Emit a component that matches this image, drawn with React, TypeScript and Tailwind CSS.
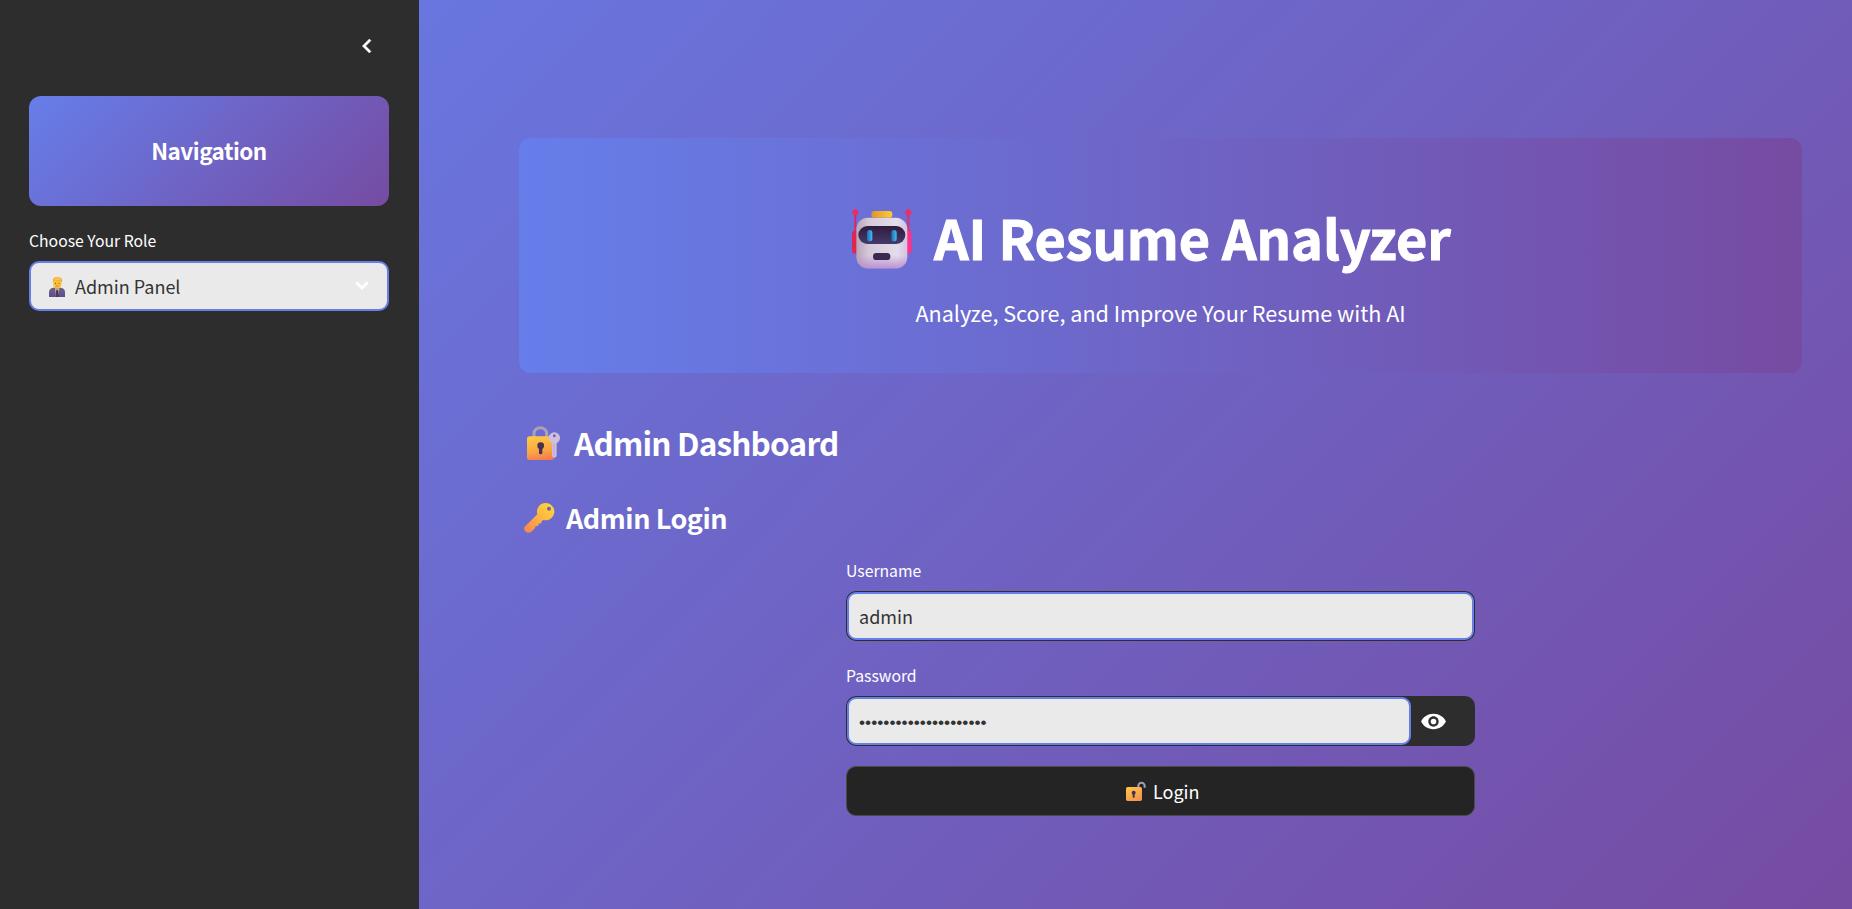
import type { ReactNode } from "react";

function RobotIcon() {
  return (
    <svg className="h-[60px] w-[60px] shrink-0" viewBox="35 27 180 180">
      <defs>
        <linearGradient id="rb-face" x1="0" y1="0" x2="1" y2="0">
          <stop offset="0" stopColor="#b9a3b8" />
          <stop offset="0.25" stopColor="#d6cad9" />
          <stop offset="0.8" stopColor="#e4dcec" />
          <stop offset="1" stopColor="#d3c3e0" />
        </linearGradient>
        <linearGradient id="rb-shade" x1="0" y1="0" x2="0" y2="1">
          <stop offset="0.75" stopColor="#b98ad0" stopOpacity="0" />
          <stop offset="1" stopColor="#b98ad0" stopOpacity="0.9" />
        </linearGradient>
        <linearGradient id="rb-visor" x1="0" y1="0" x2="0" y2="1">
          <stop offset="0" stopColor="#2f1c3c" />
          <stop offset="1" stopColor="#453a6b" />
        </linearGradient>
        <linearGradient id="rb-hat" x1="0" y1="0" x2="1" y2="0">
          <stop offset="0" stopColor="#dd9433" />
          <stop offset="1" stopColor="#ffcb31" />
        </linearGradient>
        <linearGradient id="rb-eye" x1="0" y1="0" x2="1" y2="0">
          <stop offset="0" stopColor="#1c6fae" />
          <stop offset="1" stopColor="#45bdf3" />
        </linearGradient>
      </defs>
      <rect x="42" y="40" width="6" height="60" fill="#d62a5f" />
      <rect x="201" y="40" width="6" height="60" fill="#e82c68" />
      <circle cx="45" cy="37" r="9" fill="#ee2b61" />
      <circle cx="204" cy="37" r="9" fill="#f22b64" />
      <rect x="35" y="92" width="24" height="69" rx="9" fill="#e0264f" />
      <rect x="191" y="92" width="23" height="69" rx="9" fill="#f9328a" />
      <rect x="48" y="53" width="153" height="152" rx="35" fill="url(#rb-face)" />
      <rect x="48" y="53" width="153" height="152" rx="35" fill="url(#rb-shade)" />
      <rect x="93" y="33" width="63" height="20" rx="9" fill="url(#rb-hat)" />
      <rect x="54" y="78" width="141" height="54" rx="27" fill="url(#rb-visor)" />
      <rect x="80" y="90" width="16" height="34" rx="8" fill="url(#rb-eye)" />
      <rect x="153" y="90" width="16" height="34" rx="8" fill="url(#rb-eye)" />
      <rect x="98" y="159" width="52" height="21" rx="10" fill="#3a2a50" />
    </svg>
  );
}

function LockKeyIcon() {
  return (
    <svg className="h-[35px] w-[34px] shrink-0" viewBox="36 35 102 105">
      <defs>
        <linearGradient id="lk-body" x1="0.4" y1="0" x2="0.6" y2="1">
          <stop offset="0" stopColor="#ffc844" />
          <stop offset="0.6" stopColor="#f9a644" />
          <stop offset="1" stopColor="#f47a4e" />
        </linearGradient>
      </defs>
      <path d="M57 72V57a19 17 0 0 1 38 0v15" fill="none" stroke="#aaa2b4" strokeWidth="9" />
      <rect x="36" y="66" width="81" height="71" rx="8" fill="url(#lk-body)" />
      <circle cx="77" cy="94" r="10" fill="#46304f" />
      <rect x="72" y="98" width="10" height="22" rx="4" fill="#46304f" />
      <path d="M111 84h14v41l-6 6-8-5z" fill="#cdbbdd" />
      <circle cx="118" cy="71" r="17" fill="#cfc0df" />
      <circle cx="118" cy="64" r="4.5" fill="#6f66bd" />
      <path d="M117 90v34" stroke="#b6a5cf" strokeWidth="2.5" />
    </svg>
  );
}

function KeyIcon() {
  return (
    <svg className="h-[30px] w-[31px] shrink-0" viewBox="28 265 93 90">
      <defs>
        <linearGradient id="ky" x1="1" y1="0" x2="0" y2="1">
          <stop offset="0" stopColor="#ffdb3d" />
          <stop offset="0.45" stopColor="#fbb741" />
          <stop offset="1" stopColor="#f58352" />
        </linearGradient>
      </defs>
      <path
        d="M94 265a26 26 0 1 1-8 51l-5 3-1 7-8 1-2 7-8 1-1 6-12 11q-7 5-15 0q-9-7-4-16l38-37a26 26 0 0 1 26-34z"
        fill="url(#ky)"
      />
      <circle cx="103" cy="282" r="6" fill="#6b62b8" />
    </svg>
  );
}

function OpenLockIcon() {
  return (
    <svg className="h-5 w-5 shrink-0" viewBox="78 63 60 60">
      <defs>
        <linearGradient id="ol" x1="0.2" y1="0" x2="0.8" y2="1">
          <stop offset="0" stopColor="#ffc445" />
          <stop offset="1" stopColor="#f4904f" />
        </linearGradient>
      </defs>
      <path d="M115 83v-5a9.500 9.500 0 0 1 19 0v5" fill="none" stroke="#a79db4" strokeWidth="6" />
      <rect x="78" y="81" width="48" height="42" rx="5" fill="url(#ol)" />
      <circle cx="101" cy="98" r="6" fill="#46304f" />
      <rect x="98" y="100" width="6" height="13" rx="2" fill="#46304f" />
    </svg>
  );
}

function OfficeWorkerIcon() {
  return (
    <svg className="mt-px h-5 w-4 shrink-0" viewBox="41 35 49 61">
      <defs>
        <linearGradient id="ow" x1="0" y1="0" x2="0" y2="1">
          <stop offset="0" stopColor="#6d6180" />
          <stop offset="1" stopColor="#604d8c" />
        </linearGradient>
      </defs>
      <path d="M41 96V82q0-12 13-14h23q13 2 13 14v14z" fill="url(#ow)" />
      <path d="M59 66h14l-3 30h-8z" fill="#b9aec8" />
      <path d="M63 75h6l3 21H61z" fill="#4a3a63" />
      <path d="M59 58h14v10l-7 7-7-7z" fill="#e79a3c" />
      <rect x="54" y="39" width="25" height="29" rx="11" fill="#fbc03c" />
      <path d="M53 52V45q2-10 13-10q14 0 15 10v7l-4-6q-12 0-20-3z" fill="#e8a32f" />
      <path d="M55 43q4-7 12-7q10 0 12 9z" fill="#fdc545" />
      <circle cx="61" cy="54" r="1.800" fill="#6b4632" />
      <circle cx="72" cy="54" r="1.800" fill="#6b4632" />
      <path d="M62 62h8" stroke="#b0622c" strokeWidth="2" />
    </svg>
  );
}

function Label({ children }: { children: ReactNode }) {
  return <div className="h-[30px] text-[15.75px] leading-8">{children}</div>;
}

function Sidebar() {
  return (
    <aside className="flex w-[419px] shrink-0 flex-col bg-[#2d2d2d] pl-[29px] pr-[30px]">
      <div className="flex h-24 justify-end pt-8 pr-2">
        <svg className="h-[28px] w-[28px]" viewBox="0 0 24 24" fill="#fff" stroke="#fff" strokeWidth="0.400">
          <path d="M15.41 7.41 14 6l-6 6 6 6 1.410-1.410L10.830 12z" />
        </svg>
      </div>
      <div className="flex h-[110px] items-center justify-center rounded-xl bg-[linear-gradient(135deg,#667eea_0%,#764ba2_100%)] text-[22.5px] font-bold leading-none tracking-[-0.5px]">
        <span className="-mt-px">Navigation</span>
      </div>
      <div className="mt-[19px]">
        <Label>Choose Your Role</Label>
      </div>
      <div className="mt-1.5 flex h-[50px] items-center rounded-[10px] border-2 border-[#667eea] bg-[#eaeaea] pl-[18px] pr-[18px] text-[18px] text-[#333333]">
        <OfficeWorkerIcon />
        <span className="ml-[10px] grow">Admin Panel</span>
        <svg className="h-[10px] w-[14px]" viewBox="0 0 14 10" fill="none">
          <path d="M2 2l5 5 5-5" stroke="#fff" strokeWidth="2.800" strokeLinecap="round" />
        </svg>
      </div>
    </aside>
  );
}

export default function App() {
  return (
    <div className="flex h-[909px] w-[1852px] overflow-hidden bg-[linear-gradient(135deg,#667eea_0%,#764ba2_100%)] font-['Noto_Sans_CJK_SC',sans-serif] text-white">
      <Sidebar />
      <main className="flex grow flex-col pl-[100px] pr-[50px] pt-[138px]">
        <header className="h-[235px] rounded-xl bg-[linear-gradient(90deg,#667eea_0%,#764ba2_100%)] pt-[62px]">
          <div className="flex h-[72px] pl-[333px]">
            <div className="pt-[9px]">
              <RobotIcon />
            </div>
            <h1 className="ml-[22px] text-[54px] font-bold leading-[74px] tracking-[-0.1px] [-webkit-text-stroke:1px_white]">
              AI Resume Analyzer
            </h1>
          </div>
          <p className="mt-[23px] text-center text-[21.6px] leading-9 tracking-[-0.04px]">
            Analyze, Score, and Improve Your Resume with AI
          </p>
        </header>

        <div className="mt-12 flex h-[42px] pl-2">
          <div className="pt-[5px]">
            <LockKeyIcon />
          </div>
          <h2 className="ml-[13px] text-[31.5px] font-bold leading-[43px] tracking-[-0.8px]">Admin Dashboard</h2>
        </div>
        <div className="mt-9 flex h-9 pl-[5px]">
          <div className="pt-1">
            <KeyIcon />
          </div>
          <h3 className="ml-[11px] text-[27px] font-bold leading-[38px] tracking-[-0.45px]">Admin Login</h3>
        </div>

        <form className="ml-[327px] mt-5 w-[629px]">
          <Label>Username</Label>
          <div className="mt-1.5 h-[50px] rounded-[10px] bg-[#2d2d2d] p-px">
            <div className="flex h-full items-center rounded-[9px] border-2 border-[#667eea] bg-[#eaeaea] pl-[10px] text-[18px] text-[#333333]">
              admin
            </div>
          </div>
          <div className="mt-[19px]">
            <Label>Password</Label>
          </div>
          <div className="mt-1.5 flex h-[50px] rounded-[10px] bg-[#2d2d2d] p-px">
            <div className="flex h-full w-[564px] items-center rounded-[9px] border-2 border-[#667eea] bg-[#eaeaea] pl-[10px] pt-[3px] font-['Liberation_Sans',sans-serif] text-[17.3px] tracking-[0.03px] text-[#333333]">
              •••••••••••••••••••••
            </div>
            <svg className="ml-[9px] mt-[11px] h-[27px] w-[27px]" viewBox="0 0 24 24" fill="#fff">
              <path d="M12 5.200C7 5.200 2.730 8 1 12c1.730 4 6 6.800 11 6.800s9.270-2.800 11-6.800c-1.730-4-6-6.800-11-6.800zM12 16.600c-2.540 0-4.600-2.060-4.600-4.600s2.060-4.600 4.600-4.600 4.600 2.060 4.600 4.600-2.060 4.600-4.600 4.600zm0-7.100a2.500 2.500 0 1 0 0 5 2.500 2.500 0 0 0 0-5z" />
            </svg>
          </div>
          <button
            type="button"
            className="mt-5 flex h-[50px] w-full items-center rounded-[10px] border border-[#4a4a4a] bg-[#242424] pl-[279px] text-[18px]"
          >
            <OpenLockIcon />
            <span className="ml-[7px]">Login</span>
          </button>
        </form>
      </main>
    </div>
  );
}
